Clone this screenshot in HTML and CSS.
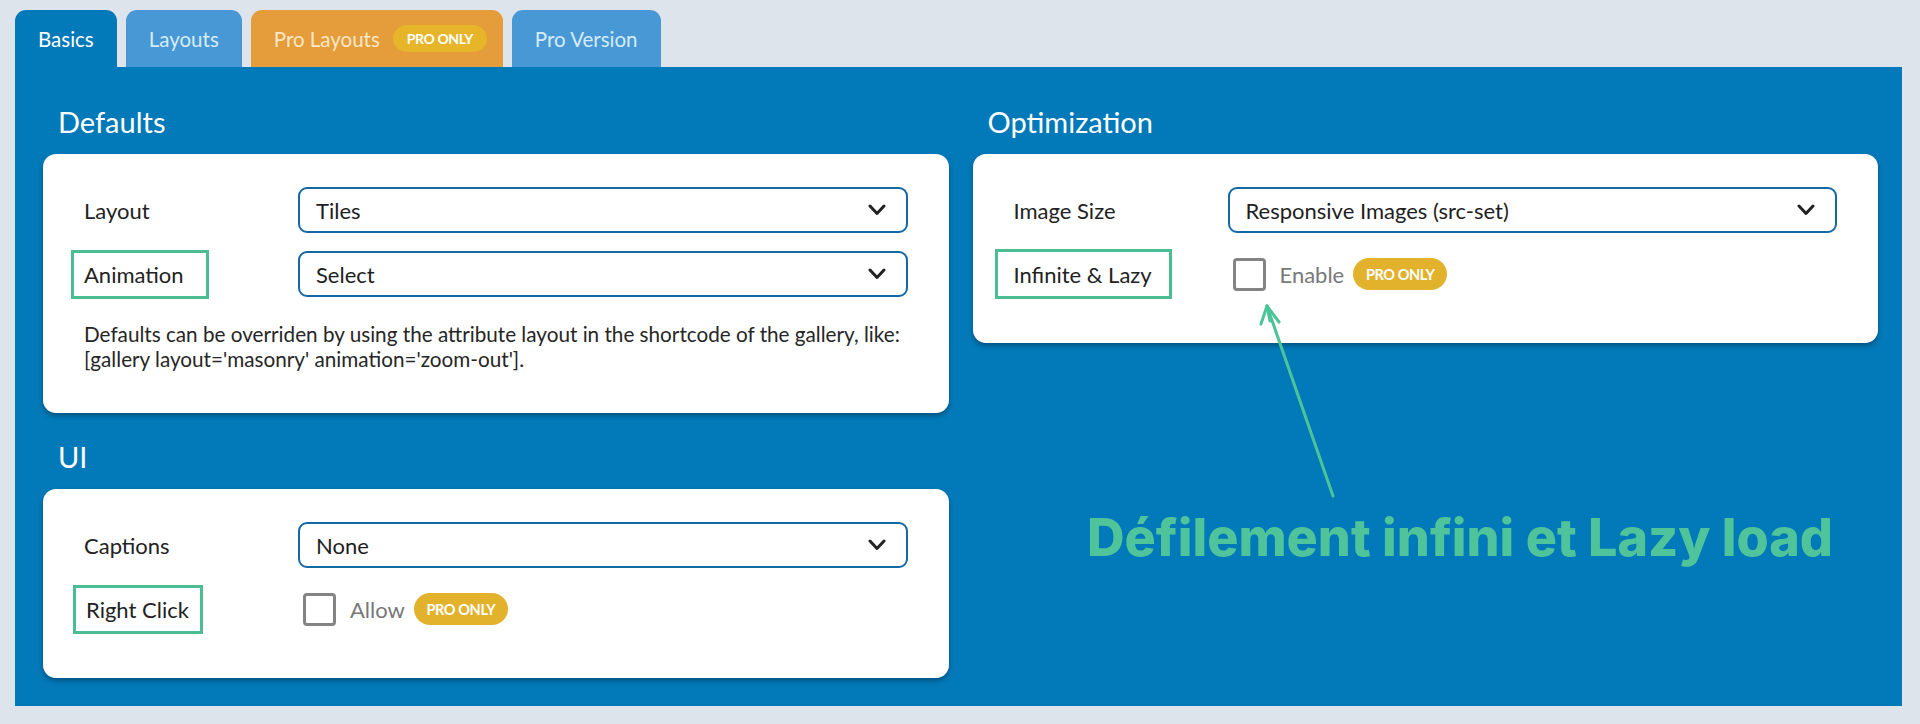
FILE: index.html
```html
<!DOCTYPE html>
<html lang="en">
<head>
<meta charset="utf-8">
<title>Gallery settings</title>
<link rel="stylesheet" href="styles.css">
</head>
<body>
<div class="page">
  <nav class="tabs">
    <div class="tab tab-active">Basics</div>
    <div class="tab tab-blue">Layouts</div>
    <div class="tab tab-orange">Pro Layouts <span class="badge badge-tab">PRO ONLY</span></div>
    <div class="tab tab-blue">Pro Version</div>
  </nav>
  <main class="panel">
    <div class="col">
      <h2 class="heading">Defaults</h2>
      <section class="card">
        <div class="row">
          <div class="label"><span>Layout</span></div>
          <div class="select"><span>Tiles</span><svg class="chev" viewBox="0 0 18 12"><polyline points="2,2 9,9.5 16,2"/></svg></div>
        </div>
        <div class="row">
          <div class="label"><span class="hl hl-anim">Animation</span></div>
          <div class="select"><span>Select</span><svg class="chev" viewBox="0 0 18 12"><polyline points="2,2 9,9.5 16,2"/></svg></div>
        </div>
        <p class="note">Defaults can be overriden by using the attribute layout in the shortcode of the gallery, like:<br>[gallery layout='masonry' animation='zoom-out'].</p>
      </section>
      <h2 class="heading heading-ui">UI</h2>
      <section class="card card-short">
        <div class="row">
          <div class="label"><span>Captions</span></div>
          <div class="select"><span>None</span><svg class="chev" viewBox="0 0 18 12"><polyline points="2,2 9,9.5 16,2"/></svg></div>
        </div>
        <div class="row">
          <div class="label"><span class="hl hl-right">Right Click</span></div>
          <div class="check-wrap"><span class="checkbox"></span><span class="check-text">Allow</span><span class="badge">PRO ONLY</span></div>
        </div>
      </section>
    </div>
    <div class="col">
      <h2 class="heading">Optimization</h2>
      <section class="card card-short">
        <div class="row">
          <div class="label"><span>Image Size</span></div>
          <div class="select"><span>Responsive Images (src-set)</span><svg class="chev" viewBox="0 0 18 12"><polyline points="2,2 9,9.5 16,2"/></svg></div>
        </div>
        <div class="row">
          <div class="label"><span class="hl hl-inf">Infinite &amp; Lazy</span></div>
          <div class="check-wrap"><span class="checkbox"></span><span class="check-text">Enable</span><span class="badge">PRO ONLY</span></div>
        </div>
      </section>
    </div>
    <svg class="arrow" viewBox="0 0 100 220" width="100" height="220">
      <line x1="78" y1="205" x2="12" y2="15"/>
      <polyline points="6,33 12,15 24,31"/>
      <line x1="12" y1="15" x2="15" y2="30"/>
    </svg>
    <div class="callout">Défilement infini et Lazy load</div>
  </main>
</div>
</body>
</html>
```
FILE: styles.css
```css
* { box-sizing: border-box; }
html, body { margin: 0; padding: 0; }
body {
  background: #dde4ec;
  font-family: Lato, "Open Sans", "Liberation Sans", sans-serif;
  color: #222;
  width: 1920px;
  height: 724px;
  overflow: hidden;
}
.page {
  padding: 10px 18px 0 15px;
}
.tabs {
  display: flex;
  gap: 9px;
  height: 57px;
}
.tab {
  display: flex;
  align-items: center;
  padding: 0 23px;
  font-size: 20.5px;
  border-radius: 11px 11px 0 0;
  color: #d6ebf8;
}
.tab-active { background: #0279b8; color: #fff; }
.tab-blue { background: #4798d4; }
.tab-orange { background: #e59c3a; color: #fbe7c6; padding-right: 16px; }
.badge {
  display: inline-flex;
  align-items: center;
  justify-content: center;
  background: #e2b22c;
  color: #fff;
  font-weight: 700;
  font-size: 14.5px;
  letter-spacing: -0.4px;
  height: 32px;
  width: 94px;
  border-radius: 16px;
}
.badge-tab {
  margin-left: 13px;
  height: 27px;
  font-size: 14px;
  background: #e6b52a;
}
.panel {
  position: relative;
  background: #0279b8;
  height: 639px;
  padding: 0 24px 0 28px;
  display: grid;
  grid-template-columns: 1fr 1fr;
  column-gap: 24px;
  align-items: start;
}
.heading {
  margin: 38px 0 15px 15px;
  font-size: 29px;
  font-weight: 400;
  line-height: 34px;
  color: #fff;
}
.heading-ui { margin-top: 27px; }
.card {
  background: #fff;
  border-radius: 13px;
  box-shadow: 0 3px 5px rgba(0, 0, 0, 0.3);
  padding: 33px 41px 41px 41px;
  display: flex;
  flex-direction: column;
  gap: 18px;
}
.card-short { padding-bottom: 46px; }
.row {
  display: flex;
  align-items: center;
  height: 46px;
}
.label {
  width: 214px;
  flex: none;
  font-size: 22px;
}
.hl {
  display: inline-flex;
  align-items: center;
  height: 49px;
  border: 3px solid #4cbd93;
  margin-left: -13px;
  padding: 0 10px 0 10px;
  white-space: nowrap;
}
.hl-anim { width: 138px; }
.hl-right { width: 130px; margin-left: -11px; }
.hl-inf { width: 177px; margin-left: -19px; padding-left: 16px; height: 50px; }
.select {
  flex: 1;
  height: 46px;
  border: 2.5px solid #1368a6;
  border-radius: 9px;
  display: flex;
  align-items: center;
  justify-content: space-between;
  padding: 0 20px 0 16px;
  font-size: 22px;
  color: #1e1e1e;
}
.chev {
  width: 18px;
  height: 12px;
  fill: none;
  stroke: #222;
  stroke-width: 3;
  stroke-linecap: round;
  stroke-linejoin: round;
}
.note {
  margin: 7px 0 0;
  font-size: 20.7px;
  line-height: 25px;
  color: #262626;
  white-space: nowrap;
}
.check-wrap {
  display: flex;
  align-items: center;
  margin-left: 5px;
}
.checkbox {
  width: 33px;
  height: 33px;
  border: 3px solid #848484;
  border-radius: 4px;
  flex: none;
}
.check-text {
  margin: 0 9px 0 14px;
  font-size: 22px;
  color: #787878;
}
.arrow {
  position: absolute;
  left: 1240px;
  top: 224px;
  overflow: visible;
}
.arrow line, .arrow polyline {
  fill: none;
  stroke: #4cc49a;
  stroke-width: 3;
  stroke-linecap: round;
  stroke-linejoin: round;
}
.callout {
  position: absolute;
  left: 1072px;
  top: 439px;
  font-family: Inter, "Open Sans", sans-serif;
  font-weight: 800;
  font-size: 52px;
  letter-spacing: 0;
  color: #4fc49a;
  white-space: nowrap;
}
```
